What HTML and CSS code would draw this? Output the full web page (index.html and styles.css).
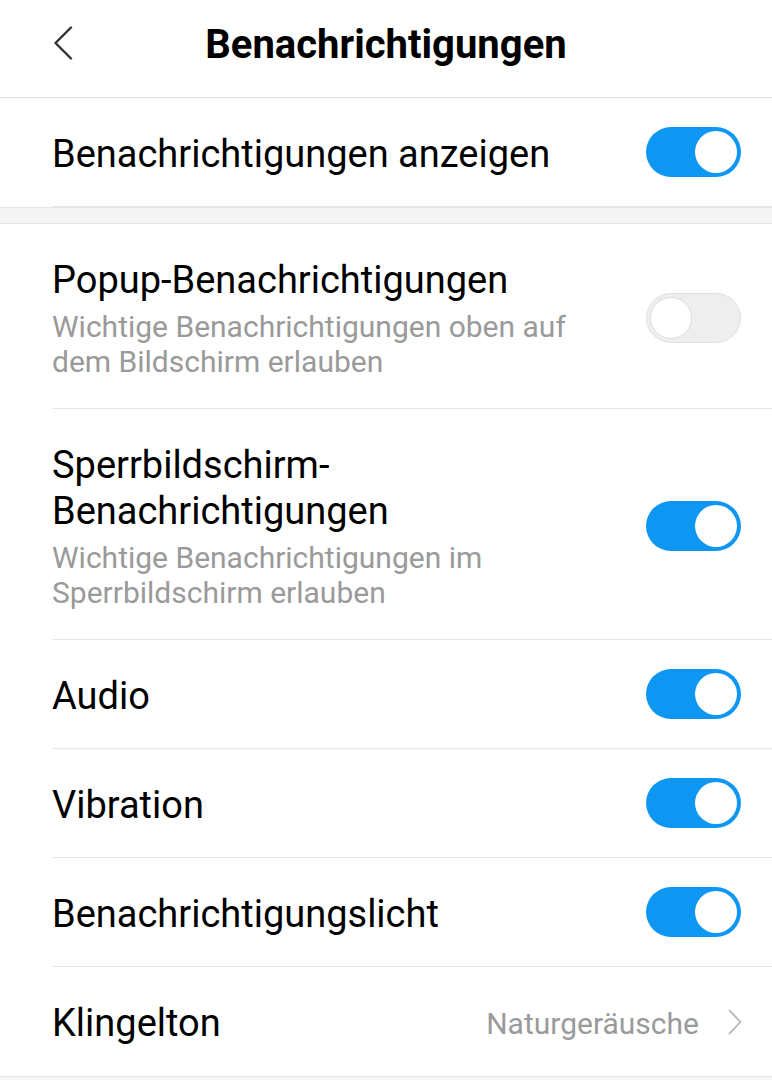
FILE: index.html
```html
<!DOCTYPE html>
<html lang="de">
<head>
<meta charset="utf-8">
<title>Benachrichtigungen</title>
<link rel="stylesheet" href="styles.css">
</head>
<body>
<div class="screen">
  <header class="topbar">
    <button class="back" aria-label="Zurück">
      <svg width="20" height="34" viewBox="0 0 20 34"><path d="M18 1.5 L2.5 17 L18 32.5" fill="none" stroke="#333" stroke-width="2.4" stroke-linecap="round" stroke-linejoin="round"/></svg>
    </button>
    <h1 class="title">Benachrichtigungen</h1>
  </header>

  <section class="group">
    <div class="row">
      <div class="text"><div class="label">Benachrichtigungen anzeigen</div></div>
      <span class="toggle on"><span class="knob"></span></span>
    </div>
  </section>

  <div class="gap"></div>

  <section class="group">
    <div class="row multi">
      <div class="text">
        <div class="label">Popup-Benachrichtigungen</div>
        <div class="sub">Wichtige Benachrichtigungen oben auf<br>dem Bildschirm erlauben</div>
      </div>
      <span class="toggle off"><span class="knob"></span></span>
    </div>
    <div class="row multi">
      <div class="text">
        <div class="label">Sperrbildschirm-<br>Benachrichtigungen</div>
        <div class="sub">Wichtige Benachrichtigungen im<br>Sperrbildschirm erlauben</div>
      </div>
      <span class="toggle on"><span class="knob"></span></span>
    </div>
    <div class="row">
      <div class="text"><div class="label">Audio</div></div>
      <span class="toggle on"><span class="knob"></span></span>
    </div>
    <div class="row">
      <div class="text"><div class="label">Vibration</div></div>
      <span class="toggle on"><span class="knob"></span></span>
    </div>
    <div class="row">
      <div class="text"><div class="label">Benachrichtigungslicht</div></div>
      <span class="toggle on"><span class="knob"></span></span>
    </div>
    <div class="row last">
      <div class="text"><div class="label">Klingelton</div></div>
      <span class="value">Naturgeräusche</span>
      <svg class="chev" width="14" height="26" viewBox="0 0 14 26"><path d="M1.5 1.5 L12.5 13 L1.5 24.5" fill="none" stroke="#b3b3b3" stroke-width="1.8" stroke-linecap="round" stroke-linejoin="round"/></svg>
    </div>
  </section>

  <div class="gap bottom"></div>
</div>
</body>
</html>
```

FILE: styles.css
```css
* { box-sizing: border-box; }
html, body { margin: 0; padding: 0; background: #fff; }
body { font-family: Roboto, "Noto Sans", "Liberation Sans", sans-serif; color: #000; }
.screen { width: 772px; }

.topbar {
  height: 98px;
  border-bottom: 1px solid #dcdcdc;
  display: flex;
  align-items: center;
  justify-content: center;
  position: relative;
  padding-bottom: 8px;
}
.back {
  position: absolute;
  left: 53px;
  top: 26px;
  background: none;
  border: 0;
  padding: 0;
  width: 20px;
  height: 34px;
}
.back svg { display: block; }
.title {
  margin: 0;
  font-size: 40px;
  font-weight: 700;
  letter-spacing: 0;
  line-height: 48px;
}

.group { padding-left: 52px; }
.row {
  display: flex;
  align-items: center;
  min-height: 109px;
  border-bottom: 1px solid #e6e6e6;
  padding-right: 31px;
}
.row .text { padding-top: 3px; }
.row.last, .group:first-child .row { border-bottom: 0; }
.row.multi { padding-top: 33px; padding-bottom: 29px; }
.row.multi .text { padding-top: 0; }
.text { flex: 1; min-width: 0; }
.label { font-size: 38px; line-height: 46px; }
.sub {
  font-size: 30px;
  line-height: 35px;
  color: #9a9a9a;
  margin-top: 6px;
}

.gap {
  height: 17px;
  background: #f5f5f5;
  border-top: 1px solid #e6e6e6;
  border-bottom: 1px solid #e6e6e6;
}
.gap.bottom { height: 6px; border-bottom: 0; }

.toggle {
  flex: none;
  width: 95px;
  height: 50px;
  border-radius: 25px;
  display: flex;
  align-items: center;
  padding: 0 4px;
}
.toggle.on { background: #0d96f2; justify-content: flex-end; }
.toggle.off { background: #eeeeee; border: 1px solid #e0e0e0; justify-content: flex-start; padding: 0 3px; }
.knob {
  width: 42px;
  height: 42px;
  border-radius: 50%;
  background: #fff;
}
.toggle.off .knob { border: 1px solid #dcdcdc; }

.value { font-size: 30px; color: #9a9a9a; margin-right: 29px; padding-top: 3px; }
.chev { flex: none; margin-right: -1px; }
```
